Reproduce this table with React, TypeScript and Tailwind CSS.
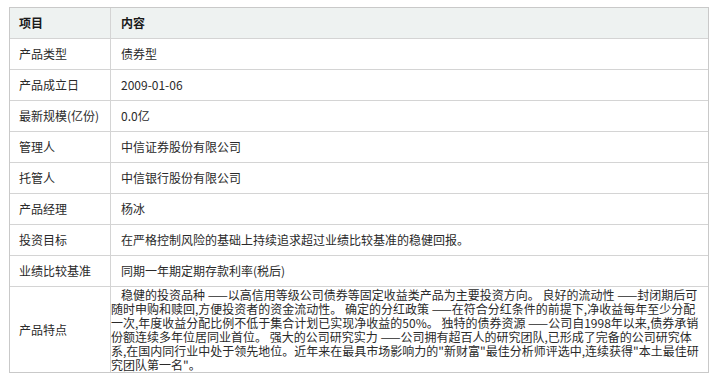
import React from 'react';

const ROWS: [string, string][] = [
  ['产品类型', '债券型'],
  ['产品成立日', '2009-01-06'],
  ['最新规模(亿份)', '0.0亿'],
  ['管理人', '中信证券股份有限公司'],
  ['托管人', '中信银行股份有限公司'],
  ['产品经理', '杨冰'],
  ['投资目标', '在严格控制风险的基础上持续追求超过业绩比较基准的稳健回报。'],
  ['业绩比较基准', '同期一年期定期存款利率(税后)'],
];

// the feature text, broken exactly where the reference breaks it
const FEATURE_LINES = [
  '稳健的投资品种 ——以高信用等级公司债券等固定收益类产品为主要投资方向。 良好的流动性 ——封闭期后可',
  '随时申购和赎回,方便投资者的资金流动性。 确定的分红政策 ——在符合分红条件的前提下,净收益每年至少分配',
  '一次,年度收益分配比例不低于集合计划已实现净收益的50%。 独特的债券资源 ——公司自1998年以来,债券承销',
  '份额连续多年位居同业首位。 强大的公司研究实力 ——公司拥有超百人的研究团队,已形成了完备的公司研究体',
  '系,在国内同行业中处于领先地位。近年来在最具市场影响力的"新财富"最佳分析师评选中,连续获得"本土最佳研',
  '究团队第一名"。',
];

const App: React.FC = () => {
  return (
    <div className="w-[726px] h-[385px] bg-white pt-[7px] pl-[9px] font-['Noto_Sans_CJK_SC','Noto_Sans',sans-serif] text-[12px] text-[#2a2a2a]">
      <div className="w-[700px] border border-[#c9c9c9] flex flex-col">
        {/* Header */}
        <div className="h-[31px] flex bg-[#eef2f1] border-b border-[#d4d4d4] font-bold text-[#1a1a1a]">
          <div className="w-[101px] border-r border-[#d4d4d4] flex items-center pl-[9px]">项目</div>
          <div className="flex-1 flex items-center pl-[10px]">内容</div>
        </div>

        {ROWS.map(([label, value]) => (
          <div key={label} className="h-[31px] flex border-b border-[#d4d4d4]">
            <div className="w-[101px] border-r border-[#d4d4d4] flex items-center pl-[9px]">{label}</div>
            <div className="flex-1 flex items-center pl-[10px]">{value}</div>
          </div>
        ))}

        {/* 产品特点 */}
        <div className="h-[85px] flex">
          <div className="w-[101px] border-r border-[#d4d4d4] flex items-center pl-[9px]">产品特点</div>
          <div className="flex-1 pt-[1px] leading-[14px] overflow-hidden">
            {FEATURE_LINES.map((line, i) => (
              <div key={i} className={`whitespace-nowrap ${i === 0 ? 'pl-[10px]' : ''}`}>
                {line}
              </div>
            ))}
          </div>
        </div>
      </div>
    </div>
  );
};

export default App;
